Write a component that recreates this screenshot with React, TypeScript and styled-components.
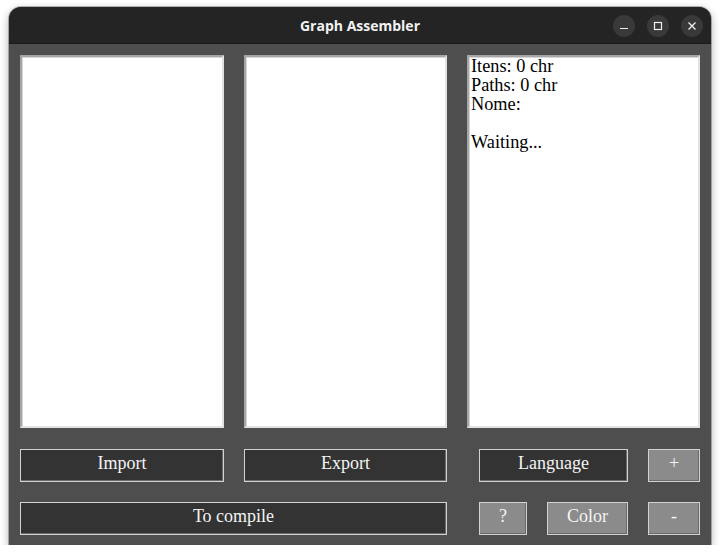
import React from "react";
import styled, { createGlobalStyle } from "styled-components";

const Global = createGlobalStyle`
  html, body { margin: 0; padding: 0; background: #ffffff; }
  body { padding: 7px 9px 0 9px; }
`;

const Window = styled.div`
  width: 702px;
  height: 538px;
  border-radius: 12px 12px 0 0;
  background: #4e4e4e;
  box-shadow: 0 3px 10px rgba(0, 0, 0, 0.35), 0 0 0 1px rgba(0, 0, 0, 0.25);
  display: flex;
  flex-direction: column;
  overflow: hidden;
`;

const TitleBar = styled.div`
  height: 37px;
  flex: none;
  background: #242424;
  border-bottom: 1px solid #1a1a1a;
  box-sizing: border-box;
  position: relative;
  display: flex;
  align-items: center;
  justify-content: center;
`;

const Title = styled.div`
  font-family: "Open Sans", "Noto Sans", sans-serif;
  font-weight: 700;
  font-size: 14px;
  color: #f2f2f2;
`;

const Controls = styled.div`
  position: absolute;
  right: 8px;
  top: 8px;
  display: flex;
  gap: 12px;
`;

const CtlButton = styled.div`
  width: 22px;
  height: 22px;
  border-radius: 50%;
  background: #393939;
  display: flex;
  align-items: center;
  justify-content: center;
`;

const Body = styled.div`
  flex: 1;
  padding: 11px 11px 10px 11px;
  display: grid;
  grid-template-columns: 204px 203px 233px;
  grid-template-rows: 373px 34px 33px;
  column-gap: 20px;
  row-gap: 20px;
  align-content: start;
`;

const TextBox = styled.div`
  background: #ffffff;
  box-sizing: border-box;
  border-style: solid;
  border-width: 2px;
  border-color: #a6a6a6 #e2e2e2 #e2e2e2 #a6a6a6;
  box-shadow: inset 1px 1px 0 #d6d6d6;
  font-family: "Liberation Serif", "Times New Roman", serif;
  font-size: 18.3px;
  line-height: 19px;
  color: #000;
  padding: 0 2px;
  white-space: pre;
`;

const ButtonRow = styled.div`
  display: flex;
  gap: 20px;
  padding-left: 12px;
`;

const Button = styled.div<{ $tone?: "dark" | "gray"; $w?: number; $span?: number }>`
  box-sizing: border-box;
  height: 33px;
  align-self: end;
  ${(p) => (p.$w ? `width: ${p.$w}px; flex: none;` : "")}
  ${(p) => (p.$span ? `grid-column: span ${p.$span};` : "")}
  background: ${(p) => (p.$tone === "gray" ? "#8b8b8b" : "#333333")};
  border: 1px solid #d2d2d2;
  box-shadow: inset -1px -1px 0 #6a6a6a;
  color: #f4f4f4;
  font-family: "Liberation Serif", "Times New Roman", serif;
  font-size: 18px;
  display: flex;
  justify-content: center;
  align-items: flex-start;
  padding-top: 3px;
  line-height: 20px;
`;

export default function App() {
  return (
    <>
      <Global />
      <Window>
        <TitleBar>
          <Title>Graph Assembler</Title>
          <Controls>
            <CtlButton>
              <svg width="10" height="10" viewBox="0 0 10 10">
                <line x1="1" y1="7.5" x2="9" y2="7.5" stroke="#f0f0f0" strokeWidth="1.2" />
              </svg>
            </CtlButton>
            <CtlButton>
              <svg width="10" height="10" viewBox="0 0 10 10">
                <rect x="1.5" y="1.5" width="7" height="7" fill="none" stroke="#f0f0f0" strokeWidth="1.2" />
              </svg>
            </CtlButton>
            <CtlButton>
              <svg width="10" height="10" viewBox="0 0 10 10">
                <path d="M1.5 1.5 L8.5 8.5 M8.5 1.5 L1.5 8.5" stroke="#f0f0f0" strokeWidth="1.3" />
              </svg>
            </CtlButton>
          </Controls>
        </TitleBar>
        <Body>
          <TextBox />
          <TextBox />
          <TextBox>{"Itens: 0 chr\nPaths: 0 chr\nNome:\n\nWaiting..."}</TextBox>

          <Button>Import</Button>
          <Button>Export</Button>
          <ButtonRow>
            <Button $w={149}>Language</Button>
            <Button $w={52} $tone="gray">+</Button>
          </ButtonRow>

          <Button $span={2}>To compile</Button>
          <ButtonRow>
            <Button $w={48} $tone="gray">?</Button>
            <Button $w={81} $tone="gray">Color</Button>
            <Button $w={52} $tone="gray">-</Button>
          </ButtonRow>
        </Body>
      </Window>
    </>
  );
}
